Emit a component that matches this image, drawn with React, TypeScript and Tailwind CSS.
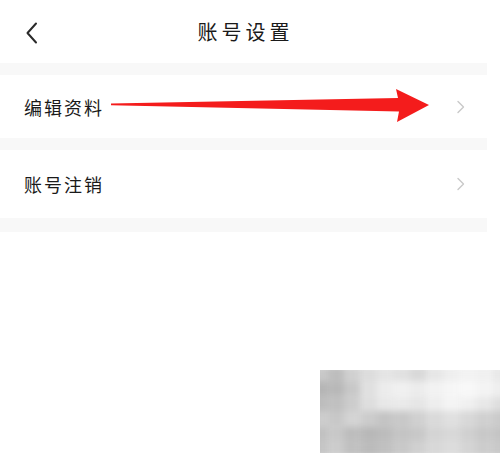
import React from "react";

const shades: string[][] = [
  ["#c8c8c8", "#bdbdbd", "#d0d0d0", "#dcdcdc", "#e4e4e4", "#e0e0e0", "#d8d8d8", "#e6e6e6", "#eeeeee", "#f2f2f2", "#f0f0f0", "#e8e8e8"],
  ["#b4b4b4", "#b8b8b8", "#c8c8c8", "#e0e0e0", "#ececec", "#f0f0f0", "#ececec", "#f2f2f2", "#f6f6f6", "#f8f8f8", "#f4f4f4", "#eeeeee"],
  ["#bcbcbc", "#c0c0c0", "#cccccc", "#dedede", "#e8e8e8", "#eaeaea", "#e6e6e6", "#eeeeee", "#f4f4f4", "#f0f0f0", "#e8e8e8", "#dedede"],
  ["#cccccc", "#c8c8c8", "#d4d4d4", "#cccccc", "#c4c4c4", "#c8c8c8", "#d0d0d0", "#dadada", "#e0e0e0", "#d8d8d8", "#d0d0d0", "#cacaca"],
  ["#c0c0c0", "#c8c8c8", "#bdbdbd", "#b8b8b8", "#bcbcbc", "#c4c4c4", "#c8c8c8", "#d4d4d4", "#d8d8d8", "#d0d0d0", "#c8c8c8", "#c4c4c4"],
  ["#c4c4c4", "#cccccc", "#c0c0c0", "#bbbbbb", "#c0c0c0", "#c8c8c8", "#d0d0d0", "#d8d8d8", "#dcdcdc", "#d4d4d4", "#cccccc", "#c8c8c8"],
];

function Chevron() {
  return (
    <svg width="10" height="14" viewBox="0 0 10 14" className="shrink-0">
      <path d="M2 1.5 L7.5 7 L2 12.5" fill="none" stroke="#c9c9c9" strokeWidth="1.4" strokeLinecap="round" strokeLinejoin="round" />
    </svg>
  );
}

export default function App() {
  const font = { fontFamily: '"Noto Sans CJK SC", "Noto Sans", sans-serif' };
  return (
    <div className="relative w-[500px] h-[453px] bg-white overflow-hidden" style={font}>
      <div className="w-[487px]">
        <div className="relative h-[63px] flex items-center justify-center">
          <svg width="14" height="22" viewBox="0 0 14 22" className="absolute left-[25px] top-[22px]">
            <path d="M11 1.5 L2.5 11 L11 20.5" fill="none" stroke="#2a2a2a" strokeWidth="2" strokeLinecap="round" strokeLinejoin="round" />
          </svg>
          <span className="text-[20px] tracking-[4px] text-[#1a1a1a] pl-[4px] leading-none">账号设置</span>
        </div>
        <div className="h-[12px] bg-[#f8f8f8]" />
        <div className="h-[63px] flex items-center justify-between pl-[24px] pr-[21px]">
          <span className="text-[18px] tracking-[2px] text-[#1a1a1a] leading-none">编辑资料</span>
          <Chevron />
        </div>
        <div className="h-[12px] bg-[#f8f8f8]" />
        <div className="h-[68px] flex items-center justify-between pl-[24px] pr-[21px]">
          <span className="text-[18px] tracking-[2px] text-[#1a1a1a] leading-none">账号注销</span>
          <Chevron />
        </div>
        <div className="h-[14px] bg-[#f8f8f8]" />
      </div>

      <svg className="absolute left-0 top-0 pointer-events-none" width="500" height="453" viewBox="0 0 500 453">
        <polygon points="111,103.6 398,98 396,89 429,105 397,122 399,111.5 111,105.2" fill="#f41c1c" />
      </svg>

      <div className="absolute left-[320px] top-[370px] w-[180px] h-[83px] overflow-hidden">
        <div className="w-full h-full grid grid-cols-12 grid-rows-6 blur-[3px] scale-110">
          {shades.flat().map((c, i) => (
            <div key={i} style={{ backgroundColor: c }} />
          ))}
        </div>
      </div>
    </div>
  );
}
